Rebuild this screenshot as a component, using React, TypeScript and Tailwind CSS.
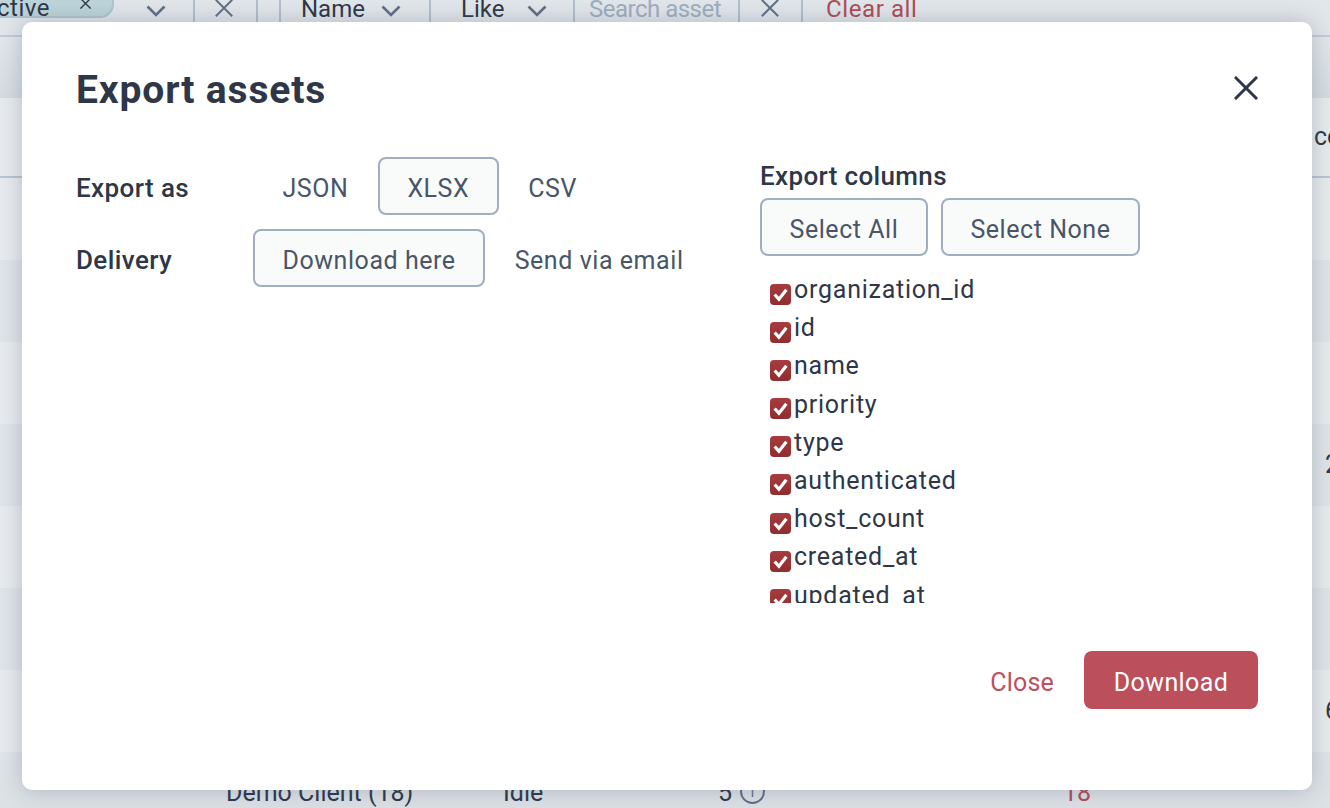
import React from 'react';

const columns = [
  'organization_id',
  'id',
  'name',
  'priority',
  'type',
  'authenticated',
  'host_count',
  'created_at',
  'updated_at',
];

const rows = [
  { top: 'bg-[#e8ecef]', last: '' },
  { top: 'bg-[#e0e5e9]', last: '' },
  { top: 'bg-[#e8ecef]', last: '' },
  { top: 'bg-[#e0e5e9]', last: '2' },
  { top: 'bg-[#e8ecef]', last: '' },
  { top: 'bg-[#e0e5e9]', last: '' },
  { top: 'bg-[#e8ecef]', last: '6' },
];

const Sep = () => <div className="w-0.5 h-[36px] bg-[#b4bfcd] shrink-0" />;

const Chevron = ({ className }: { className: string }) => (
  <svg viewBox="0 0 20 12" className={className} fill="none" stroke="#5f7085" strokeWidth="2.6">
    <path d="M1.5 1.5 L10 10 L18.5 1.5" />
  </svg>
);

const Cross = ({ size, color, width }: { size: number; color: string; width: number }) => (
  <svg width={size} height={size} viewBox="0 0 24 24" fill="none" stroke={color} strokeWidth={width} strokeLinecap="square">
    <path d="M2 2 L22 22 M22 2 L2 22" />
  </svg>
);

const FilterBar = () => (
  <div className="h-[37px] border-b-2 border-[#c3ccd8] bg-[#e2e7eb] flex items-start text-[24px] leading-[18px] text-[#2d3748] overflow-hidden">
    <div className="w-[114px] h-[18px] bg-[#bdd5d9] border-b-2 border-r-2 border-[#afc6cf] rounded-br-[14px] flex items-start shrink-0 overflow-hidden">
      <span className="ml-[-3px] w-[83px] text-[24px] leading-[16px] tracking-[0.5px]">ctive</span>
      <span className="mt-[-2px]"><Cross size={11} color="#2d3748" width={3} /></span>
    </div>
    <Chevron className="w-[20px] h-[12px] ml-[32px] mt-[5px] shrink-0" />
    <div className="ml-[27px] -mt-2"><Sep /></div>
    <div className="ml-[20px] mt-[-1px] shrink-0"><Cross size={18} color="#5f7085" width={2.6} /></div>
    <div className="ml-[23px] -mt-2"><Sep /></div>
    <div className="ml-[21px] -mt-2"><Sep /></div>
    <span className="ml-[20px] w-[60px] shrink-0">Name</span>
    <Chevron className="w-[20px] h-[12px] ml-[20px] mt-[5px] shrink-0" />
    <div className="ml-[28px] -mt-2"><Sep /></div>
    <span className="ml-[30px] w-[44px] shrink-0">Like</span>
    <Chevron className="w-[20px] h-[12px] ml-[22px] mt-[5px] shrink-0" />
    <div className="ml-[26px] -mt-2"><Sep /></div>
    <span className="ml-[14px] w-[133px] shrink-0 text-[#a0aebf] whitespace-nowrap tracking-[-0.5px]">Search asset</span>
    <div className="ml-[16px] -mt-2"><Sep /></div>
    <div className="ml-[21px] mt-[-1px] shrink-0"><Cross size={18} color="#5f7085" width={2.6} /></div>
    <div className="ml-[22px] -mt-2"><Sep /></div>
    <span className="ml-[23px] text-[#b04c58] whitespace-nowrap tracking-[0.6px]">Clear all</span>
  </div>
);

const Background = () => (
  <div className="h-[808px] overflow-hidden text-[25px] text-[#2d3748]">
    <FilterBar />
    <div className="h-[61px] bg-gradient-to-b from-[#e3e8eb] to-[#d6dce1]" />
    <div className="h-[80px] bg-[#e8ecef] border-b-2 border-[#b9c4d4] flex items-center justify-end overflow-hidden">
      <span className="w-[16px] whitespace-nowrap overflow-hidden">co</span>
    </div>
    {rows.map((row, i) => (
      <div key={i} className={`h-[82px] ${row.top} flex items-center justify-end`}>
        <span className="w-[5px] overflow-hidden">{row.last}</span>
      </div>
    ))}
    <div className="h-[56px] bg-gradient-to-b from-[#e0e5e9] to-[#dce1e5] flex items-start pt-[27px] leading-[28px]">
      <span className="ml-[226px] w-[277px]">Demo Client (18)</span>
      <span className="w-[215px]">Idle</span>
      <span className="w-[22px]">5</span>
      <span className="w-[25px] h-[25px] rounded-full border-2 border-[#5f7085] flex items-center justify-center text-[14px] text-[#5f7085]">i</span>
      <span className="ml-[298px] text-[#b04c58]">18</span>
    </div>
  </div>
);

const OutlineButton = ({ children, active }: { children: React.ReactNode; active?: boolean }) => (
  <button
    className={`h-[58px] px-[27.5px] pt-[5px] rounded-lg border-2 text-[25px] text-[#4a5568] whitespace-nowrap tracking-[0.55px] ${
      active ? 'border-[#a0aec0] bg-[#f9fbfb]' : 'border-transparent bg-transparent'
    }`}
  >
    {children}
  </button>
);

const Check = () => (
  <span className="w-[21px] h-[21px] mt-[12.5px] rounded-[4px] bg-gradient-to-b from-[#a83c3f] to-[#8f2d2f] flex items-center justify-center shrink-0">
    <svg width="17" height="17" viewBox="0 0 16 16" fill="none" stroke="white" strokeWidth="3">
      <path d="M2.5 8 L6.5 12.5 L13.5 3.5" />
    </svg>
  </span>
);

const ExportModal = () => (
  <div className="absolute inset-0 pl-[22px] pt-[22px] font-['Roboto',sans-serif]">
    <div className="w-[1290px] h-[768px] bg-white rounded-[10px] shadow-[0_0_24px_rgba(70,85,105,0.32)] px-[54px] pt-[44px] flex flex-col">
      <div className="flex items-start justify-between">
        <h2 className="text-[39px] leading-[48px] font-bold text-[#2d3748] tracking-[0.85px]">Export assets</h2>
        <button className="mt-[10px]">
          <Cross size={24} color="#2d3748" width={3} />
        </button>
      </div>

      <div className="flex mt-[43px]">
        <div className="w-[684px] flex flex-col gap-[14px]">
          <div className="flex items-center">
            <span className="w-[177px] pt-[5px] text-[26px] tracking-[0.4px] font-medium text-[#2d3748]">Export as</span>
            <OutlineButton>JSON</OutlineButton>
            <OutlineButton active>XLSX</OutlineButton>
            <OutlineButton>CSV</OutlineButton>
          </div>
          <div className="flex items-center">
            <span className="w-[177px] pt-[5px] text-[26px] tracking-[0.4px] font-medium text-[#2d3748]">Delivery</span>
            <OutlineButton active>Download here</OutlineButton>
            <OutlineButton>Send via email</OutlineButton>
          </div>
        </div>

        <div className="flex flex-col -mt-[1px]">
          <span className="text-[26px] tracking-[0.35px] leading-[40px] font-medium text-[#2d3748]">Export columns</span>
          <div className="flex gap-[13px] mt-[2px]">
            <OutlineButton active>Select All</OutlineButton>
            <OutlineButton active>Select None</OutlineButton>
          </div>
          <div className="h-[332px] overflow-hidden mt-[15px] pl-[10px] flex flex-col">
            {columns.map(name => (
              <label key={name} className="h-[38.2px] shrink-0 flex items-start gap-[3px]">
                <Check />
                <span className="text-[25px] leading-[38px] text-[#2d3748] tracking-[0.75px]">{name}</span>
              </label>
            ))}
          </div>
        </div>
      </div>

      <div className="flex items-center justify-end gap-[30px] mt-[48px]">
        <button className="text-[25px] pt-[5px] text-[#bf4f5c] tracking-[0.2px]">Close</button>
        <button className="w-[174px] h-[58px] pt-[5px] rounded-lg bg-[#bc4f5c] text-[25px] text-white tracking-[0.4px]">Download</button>
      </div>
    </div>
  </div>
);

export default function App() {
  return (
    <div className="relative w-[1330px] h-[808px] overflow-hidden font-['Roboto',sans-serif]">
      <Background />
      <ExportModal />
    </div>
  );
}
